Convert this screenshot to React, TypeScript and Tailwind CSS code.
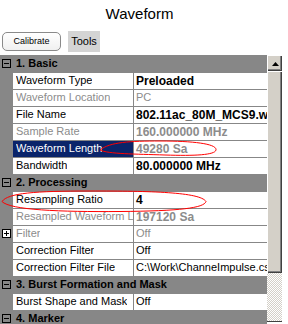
import clsx from "clsx";

type Row =
  | { kind: "cat"; title: string; first?: boolean }
  | {
      kind: "prop";
      label: string;
      value: string;
      labelDim?: boolean;
      valueDim?: boolean;
      bold?: boolean;
      selected?: boolean;
      expand?: boolean;
    };

const rows: Row[] = [
  { kind: "cat", title: "1. Basic", first: true },
  { kind: "prop", label: "Waveform Type", value: "Preloaded", bold: true },
  { kind: "prop", label: "Waveform Location", value: "PC", labelDim: true, valueDim: true },
  { kind: "prop", label: "File Name", value: "802.11ac_80M_MCS9.wfm", bold: true },
  { kind: "prop", label: "Sample Rate", value: "160.000000 MHz", labelDim: true, valueDim: true, bold: true },
  { kind: "prop", label: "Waveform Length", value: "49280 Sa", valueDim: true, bold: true, selected: true },
  { kind: "prop", label: "Bandwidth", value: "80.000000 MHz", bold: true },
  { kind: "cat", title: "2. Processing" },
  { kind: "prop", label: "Resampling Ratio", value: "4", bold: true },
  { kind: "prop", label: "Resampled Waveform Length", value: "197120 Sa", labelDim: true, valueDim: true, bold: true },
  { kind: "prop", label: "Filter", value: "Off", labelDim: true, valueDim: true, expand: true },
  { kind: "prop", label: "Correction Filter", value: "Off" },
  { kind: "prop", label: "Correction Filter File", value: "C:\\Work\\ChanneImpulse.csv" },
  { kind: "cat", title: "3. Burst Formation and Mask" },
  { kind: "prop", label: "Burst Shape and Mask", value: "Off" },
  { kind: "cat", title: "4. Marker" },
];

function ToggleBox({ open }: { open: boolean }) {
  return (
    <svg width="9" height="9" viewBox="0 0 9 9" className="block">
      <rect x="0.5" y="0.5" width="8" height="8" fill={open ? "none" : "#fff"} stroke="#000" />
      <line x1="2" y1="4.5" x2="7" y2="4.5" stroke="#000" />
      {!open && <line x1="4.5" y1="2" x2="4.5" y2="7" stroke="#000" />}
    </svg>
  );
}

function GridRow({ row }: { row: Row }) {
  if (row.kind === "cat") {
    return (
      <div className={clsx("flex items-center", row.first ? "h-[18px]" : "mt-px h-[16px]")}>
        <div className="w-[14px] pl-[2px]">
          <ToggleBox open />
        </div>
        <span className="whitespace-nowrap pl-[2px] text-[11px] font-bold text-black">{row.title}</span>
      </div>
    );
  }
  return (
    <div className="mt-px flex h-[16px]">
      <div className="flex w-[13px] items-center pl-[2px]">{row.expand && <ToggleBox open={false} />}</div>
      <div
        className={clsx(
          "flex w-[120px] items-center overflow-hidden whitespace-nowrap pl-[3px] text-[11px]",
          row.selected ? "bg-[#0a246a] text-white" : "bg-white",
          !row.selected && (row.labelDim ? "text-[#8c8c8c]" : "text-black"),
        )}
      >
        <span className="block max-w-[117px] overflow-hidden">{row.label}</span>
      </div>
      <div
        className={clsx(
          "ml-px flex w-[133px] items-center overflow-hidden whitespace-nowrap bg-white pl-[2px]",
          row.bold ? "text-[12px] font-bold" : "text-[11px]",
          row.valueDim ? "text-[#8c8c8c]" : "text-black",
        )}
      >
        {row.value}
      </div>
    </div>
  );
}

function ScrollBar() {
  return (
    <div className="flex h-[267px] w-[15px] flex-col border-b border-[#404040] bg-[#d4d0c8]">
      <div className="flex h-[16px] items-center justify-center border-t border-l border-white bg-[#d4d0c8] shadow-[inset_-1px_-1px_#404040,inset_-2px_-2px_#808080]">
        <svg width="7" height="4" viewBox="0 0 7 4">
          <polygon points="0,4 7,4 3.5,0" fill="#000" />
        </svg>
      </div>
      <div className="h-[202px] border-t border-l border-white bg-[#d4d0c8] shadow-[inset_-1px_-1px_#404040,inset_-2px_-2px_#808080]" />
      <div className="flex-1 bg-[image:repeating-conic-gradient(#d4d0c8_0_25%,#ffffff_0_50%)] bg-[length:2px_2px]" />
    </div>
  );
}

export default function App() {
  return (
    <div className="relative h-[324px] w-[288px] overflow-hidden bg-white font-['Liberation_Sans',Arial,sans-serif]">
      <div className="flex h-[28px] items-center justify-center pr-[9px] text-[15px] text-black">Waveform</div>

      <div className="flex h-[27px] items-start">
        <button className="ml-[2px] mt-[4px] flex h-[19px] w-[59px] items-center justify-center rounded-[5px] border border-[#8a8a8a] bg-gradient-to-b from-white to-[#f0f0f0] text-[9px] text-black">
          Calibrate
        </button>
        <div className="ml-[7px] mt-[3px] flex h-[21px] w-[32px] items-center justify-center bg-[#d4d4d4] text-[11px] text-black">
          Tools
        </div>
      </div>

      <div className="flex h-[269px]">
        <div className="flex w-[267px] flex-col overflow-hidden bg-[#878787]">
          {rows.map((r, i) => (
            <GridRow key={i} row={r} />
          ))}
        </div>
        <ScrollBar />
      </div>

      {/* red annotation marks */}
      <svg className="pointer-events-none absolute inset-0" width="288" height="324" viewBox="0 0 288 324">
        <path
          d="M100 150 C 110 142, 130 141, 160 141 C 195 141, 217 144, 216 150 C 215 155, 195 156, 165 155 C 135 154, 108 154, 100 150 Z"
          fill="none"
          stroke="#ff0000"
          strokeWidth="1"
        />
        <path
          d="M2 201.5 C 8 193, 35 191, 90 191 C 150 191, 200 192, 206 201.5 C 204 208, 180 211, 120 211.5 C 60 212, 10 210, 2 201.5 Z"
          fill="none"
          stroke="#ff0000"
          strokeWidth="1"
        />
      </svg>
    </div>
  );
}
